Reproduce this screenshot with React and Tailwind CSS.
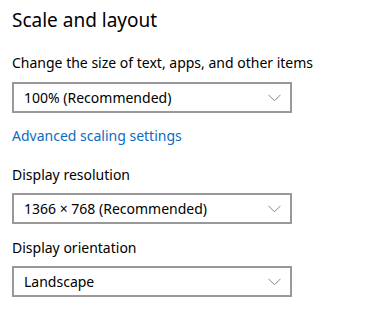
export default function App() {
  const Chevron = () => (
    <svg width="13" height="8" viewBox="0 0 13 8" className="shrink-0">
      <path d="M0.5 0.8 L6.5 6.8 L12.5 0.8" fill="none" stroke="#858585" strokeWidth="1" />
    </svg>
  );
  const Select = ({ value }) => (
    <div className="w-[280px] h-[31px] border-2 border-[#999999] bg-white flex items-center justify-between pl-[10px] pr-[9px] text-[14px] leading-[20px] text-black">
      <span>{value}</span>
      <Chevron />
    </div>
  );
  return (
    <div
      className="w-[366px] h-[312px] bg-white pl-[12px] text-black flex flex-col"
      style={{ fontFamily: '"Noto Sans", "Open Sans", sans-serif' }}
    >
      <div className="text-[19px] leading-[28px] mt-[6px]">Scale and layout</div>
      <div className="text-[14px] leading-[20px] mt-[19px]">Change the size of text, apps, and other items</div>
      <div className="mt-[9px]">
        <Select value="100% (Recommended)" />
      </div>
      <div className="text-[14px] leading-[20px] mt-[13px] text-[#0a6cc4]">Advanced scaling settings</div>
      <div className="text-[14px] leading-[20px] mt-[19px]">Display resolution</div>
      <div className="mt-[8px]">
        <Select value="1366 × 768 (Recommended)" />
      </div>
      <div className="text-[14px] leading-[20px] mt-[14px]">Display orientation</div>
      <div className="mt-[8px]">
        <Select value="Landscape" />
      </div>
    </div>
  );
}
